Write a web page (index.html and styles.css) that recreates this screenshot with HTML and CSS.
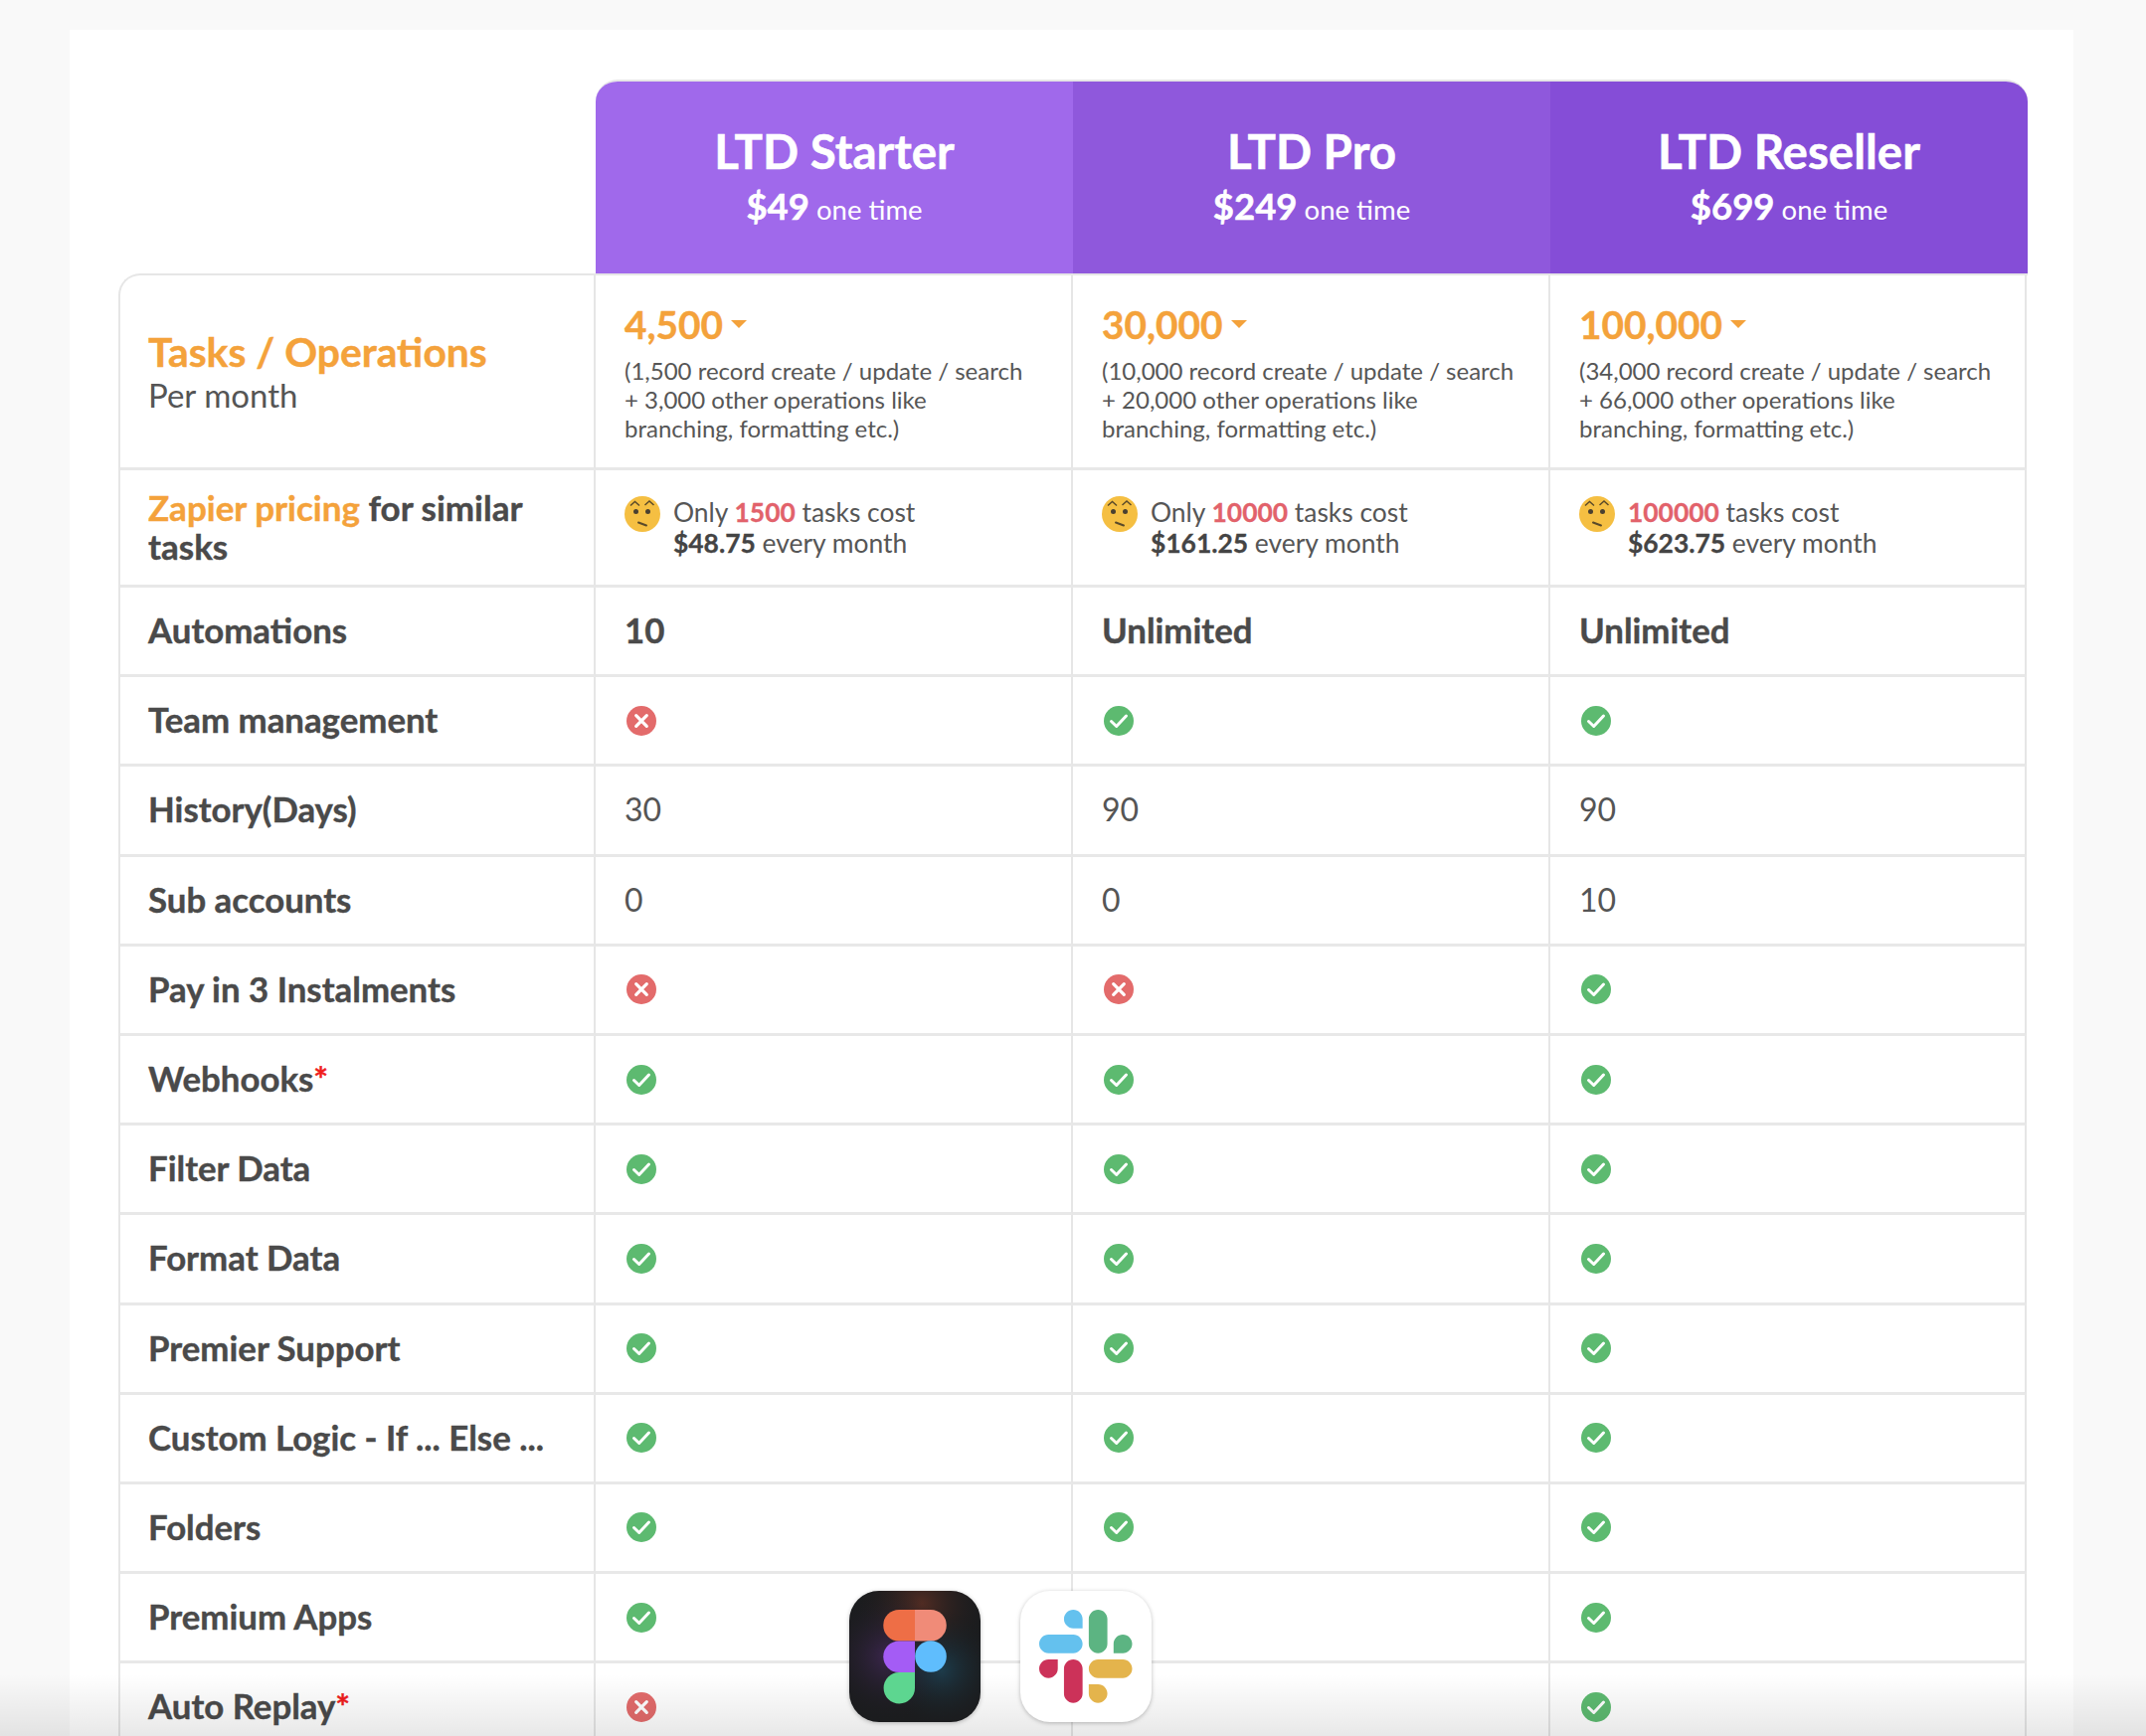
FILE: index.html
```html
<!DOCTYPE html>
<html lang="en">
<head>
<meta charset="utf-8">
<title>LTD pricing</title>
<link rel="stylesheet" href="styles.css">
</head>
<body>
<svg class="defs" width="0" height="0" aria-hidden="true">
  <symbol id="yes" viewBox="0 0 30 30"><circle cx="15" cy="15" r="15" fill="#5dba70"/><path d="M7.5 15.5l5.2 5 9.8-10.5" fill="none" stroke="#fff" stroke-width="3" stroke-linecap="round" stroke-linejoin="round"/></symbol>
  <symbol id="no" viewBox="0 0 30 30"><circle cx="15" cy="15" r="15" fill="#e36b6b"/><path d="M9.7 9.7l10.6 10.6M20.300 9.700l-10.600 10.600" fill="none" stroke="#fff" stroke-width="3.200" stroke-linecap="round"/></symbol>
  <symbol id="face" viewBox="0 0 36 36"><circle cx="18" cy="18" r="18" fill="#f5bf42"/><path d="M6 9.500l4.500-4 4.500 4M20.500 9l4.500-4 4.500 4" fill="none" stroke="#5a4a2a" stroke-width="1.500"/><circle cx="11.500" cy="15.500" r="2.500" fill="#4a4030"/><circle cx="23.500" cy="15.500" r="2.500" fill="#4a4030"/><path d="M14 26.500l8 3" fill="none" stroke="#5a4a2a" stroke-width="2" stroke-linecap="round"/></symbol>
</svg>
<main class="panel">
  <div class="plans">
    <div class="plan plan-a"><h2>LTD Starter</h2><p><b>$49</b> one time</p></div>
    <div class="plan plan-b"><h2>LTD Pro</h2><p><b>$249</b> one time</p></div>
    <div class="plan plan-c"><h2>LTD Reseller</h2><p><b>$699</b> one time</p></div>
  </div>
  <div class="grid">
    <div class="cell head first-cell"><div class="big-label">Tasks / Operations</div><div class="sub-label">Per month</div></div>
    <div class="cell tasks"><div class="count">4,500<i class="caret"></i></div><p>(1,500 record create / update / search + 3,000 other operations like branching, formatting etc.)</p></div>
    <div class="cell tasks"><div class="count">30,000<i class="caret"></i></div><p>(10,000 record create / update / search + 20,000 other operations like branching, formatting etc.)</p></div>
    <div class="cell tasks"><div class="count">100,000<i class="caret"></i></div><p>(34,000 record create / update / search + 66,000 other operations like branching, formatting etc.)</p></div>

    <div class="cell head zap-label"><span><em>Zapier pricing</em> for similar tasks</span></div>
    <div class="cell zap"><svg class="face"><use href="#face"/></svg><p>Only <strong>1500</strong> tasks cost<br><b>$48.75</b> every month</p></div>
    <div class="cell zap"><svg class="face"><use href="#face"/></svg><p>Only <strong>10000</strong> tasks cost<br><b>$161.25</b> every month</p></div>
    <div class="cell zap"><svg class="face"><use href="#face"/></svg><p><strong>100000</strong> tasks cost<br><b>$623.75</b> every month</p></div>

    <div class="cell label">Automations</div><div class="cell strong">10</div><div class="cell strong">Unlimited</div><div class="cell strong">Unlimited</div>
    <div class="cell label">Team management</div><div class="cell"><svg class="mark"><use href="#no"/></svg></div><div class="cell"><svg class="mark"><use href="#yes"/></svg></div><div class="cell"><svg class="mark"><use href="#yes"/></svg></div>
    <div class="cell label">History(Days)</div><div class="cell value">30</div><div class="cell value">90</div><div class="cell value">90</div>
    <div class="cell label">Sub accounts</div><div class="cell value">0</div><div class="cell value">0</div><div class="cell value">10</div>
    <div class="cell label">Pay in 3 Instalments</div><div class="cell"><svg class="mark"><use href="#no"/></svg></div><div class="cell"><svg class="mark"><use href="#no"/></svg></div><div class="cell"><svg class="mark"><use href="#yes"/></svg></div>
    <div class="cell label"><span>Webhooks<span class="star">*</span></span></div><div class="cell"><svg class="mark"><use href="#yes"/></svg></div><div class="cell"><svg class="mark"><use href="#yes"/></svg></div><div class="cell"><svg class="mark"><use href="#yes"/></svg></div>
    <div class="cell label">Filter Data</div><div class="cell"><svg class="mark"><use href="#yes"/></svg></div><div class="cell"><svg class="mark"><use href="#yes"/></svg></div><div class="cell"><svg class="mark"><use href="#yes"/></svg></div>
    <div class="cell label">Format Data</div><div class="cell"><svg class="mark"><use href="#yes"/></svg></div><div class="cell"><svg class="mark"><use href="#yes"/></svg></div><div class="cell"><svg class="mark"><use href="#yes"/></svg></div>
    <div class="cell label">Premier Support</div><div class="cell"><svg class="mark"><use href="#yes"/></svg></div><div class="cell"><svg class="mark"><use href="#yes"/></svg></div><div class="cell"><svg class="mark"><use href="#yes"/></svg></div>
    <div class="cell label">Custom Logic - If ... Else ...</div><div class="cell"><svg class="mark"><use href="#yes"/></svg></div><div class="cell"><svg class="mark"><use href="#yes"/></svg></div><div class="cell"><svg class="mark"><use href="#yes"/></svg></div>
    <div class="cell label">Folders</div><div class="cell"><svg class="mark"><use href="#yes"/></svg></div><div class="cell"><svg class="mark"><use href="#yes"/></svg></div><div class="cell"><svg class="mark"><use href="#yes"/></svg></div>
    <div class="cell label">Premium Apps</div><div class="cell"><svg class="mark"><use href="#yes"/></svg></div><div class="cell"><svg class="mark"><use href="#yes"/></svg></div><div class="cell"><svg class="mark"><use href="#yes"/></svg></div>
    <div class="cell label"><span>Auto Replay<span class="star">*</span></span></div><div class="cell"><svg class="mark"><use href="#no"/></svg></div><div class="cell"><svg class="mark"><use href="#yes"/></svg></div><div class="cell"><svg class="mark"><use href="#yes"/></svg></div>
  </div>
</main>
<div class="shade"></div>
<div class="dock">
  <svg class="app" viewBox="0 0 132 132" aria-label="Figma">
    <defs>
      <radialGradient id="gp" cx="0.3" cy="0.5" r="0.5"><stop offset="0" stop-color="#4a2a63" stop-opacity=".7"/><stop offset="1" stop-color="#1b1c1e" stop-opacity="0"/></radialGradient>
      <radialGradient id="gr" cx="0.55" cy="0.1" r="0.5"><stop offset="0" stop-color="#6a3325" stop-opacity=".7"/><stop offset="1" stop-color="#1b1c1e" stop-opacity="0"/></radialGradient>
      <radialGradient id="gb" cx="0.7" cy="0.6" r="0.45"><stop offset="0" stop-color="#1d4a60" stop-opacity=".7"/><stop offset="1" stop-color="#1b1c1e" stop-opacity="0"/></radialGradient>
    </defs>
    <rect width="132" height="132" rx="30" fill="#1b1c1e"/>
    <rect width="132" height="132" rx="30" fill="url(#gr)"/>
    <rect width="132" height="132" rx="30" fill="url(#gp)"/>
    <rect width="132" height="132" rx="30" fill="url(#gb)"/>
    <path d="M66 19H50a15.700 15.700 0 0 0 0 31.500h16z" fill="#ee6e46"/>
    <path d="M66 19h16a15.700 15.700 0 0 1 0 31.500H66z" fill="#f08b78"/>
    <path d="M66 50.500H50a15.700 15.700 0 0 0 0 31.500h16z" fill="#a45cf5"/>
    <circle cx="82" cy="66" r="15.800" fill="#5fbdfd"/>
    <path d="M66 82H50a15.700 15.700 0 1 0 16 15.700z" fill="#5dd690"/>
  </svg>
  <svg class="app" viewBox="0 0 132 132" aria-label="Slack">
    <rect width="132" height="132" rx="30" fill="#fff"/>
    <g transform="translate(19 19) scale(.0382)">
      <path d="m897.4 0c-135.3.1-244.8 109.9-244.7 245.2-.1 135.3 109.5 245.1 244.8 245.2h244.8v-245.1c.1-135.3-109.5-245.1-244.9-245.3.1 0 .1 0 0 0m0 654h-652.6c-135.3.1-244.9 109.9-244.8 245.2-.2 135.3 109.4 245.1 244.7 245.3h652.7c135.3-.1 244.9-109.9 244.8-245.2.1-135.4-109.5-245.2-244.8-245.3z" fill="#64c1ee"/>
      <path d="m2447.6 899.2c.1-135.3-109.5-245.1-244.8-245.2-135.3.1-244.9 109.9-244.8 245.2v245.3h244.8c135.3-.1 244.9-109.9 244.8-245.3zm-652.7 0v-654c.1-135.2-109.4-245-244.7-245.2-135.3.1-244.9 109.9-244.8 245.2v654c-.2 135.3 109.4 245.1 244.7 245.3 135.3-.1 244.9-109.9 244.8-245.3z" fill="#5cb482"/>
      <path d="m1550.1 2452.5c135.3-.1 244.9-109.9 244.8-245.2.1-135.3-109.5-245.1-244.8-245.2h-244.8v245.2c-.1 135.2 109.5 245 244.8 245.2zm0-654.1h652.700c135.3-.1 244.9-109.9 244.8-245.2.2-135.3-109.4-245.1-244.7-245.3h-652.7c-135.3.1-244.9 109.9-244.8 245.2-.1 135.4 109.4 245.2 244.7 245.3z" fill="#e4b44c"/>
      <path d="m0 1553.2c-.1 135.3 109.5 245.1 244.8 245.2 135.3-.1 244.9-109.9 244.8-245.2v-245.2h-244.8c-135.3.1-244.9 109.9-244.8 245.2zm652.7 0v654c-.2 135.3 109.4 245.1 244.7 245.3 135.3-.1 244.9-109.9 244.8-245.2v-653.9c.2-135.3-109.4-245.1-244.7-245.3-135.4 0-244.8 109.8-244.8 245.100z" fill="#cc3259"/>
    </g>
  </svg>
</div>
```
FILE: styles.css
```css
* { box-sizing: border-box; }
html, body { margin: 0; height: 100%; }
body {
  position: relative;
  height: 1746px;
  overflow: hidden;
  background: #f9f9f9;
  padding: 30px 73px 0 70px;
  font-family: "Lato", "Liberation Sans", sans-serif;
  color: #4a4a4a;
}
.defs { position: absolute; }
.panel {
  background: #fff;
  height: 1716px;
  padding: 50px 46px 0 49px;
  overflow: hidden;
}
.plans {
  display: grid;
  grid-template-columns: repeat(3, 480px);
  margin-left: 480px;
  height: 195px;
  border-top: 2px solid #e6e6e6;
  border-radius: 22px 22px 0 0;
  overflow: hidden;
}
.plan {
  color: #fff;
  text-align: center;
  padding-top: 43px;
}
.plan h2 { margin: 0; font-size: 47.500px; line-height: 54px; font-weight: 700; -webkit-text-stroke: .5px #fff; }
.plan p { margin: 3px 0 0; font-size: 27.500px; line-height: 50px; }
.plan p b { font-size: 36.500px; -webkit-text-stroke: .5px #fff; }
.plan-a { background: #a069eb; }
.plan-b { background: #8f58dc; }
.plan-c { background: #854dd7; }
.grid {
  display: grid;
  grid-template-columns: 478px 480px 480px 479px;
  grid-template-rows: 196px 118px repeat(14, 90.200px);
  border-top: 2px solid #e6e6e6;
  border-left: 2px solid #e6e6e6;
  border-top-left-radius: 22px;
}
.cell {
  display: flex;
  align-items: center;
  padding: 0 29px;
  border-right: 2px solid #e6e6e6;
  border-bottom: 3px solid #e8e8e8;
  font-size: 32px;
}
.head { flex-direction: column; align-items: flex-start; justify-content: center; padding-left: 28px; }
.big-label { font-size: 40.800px; line-height: 46px; font-weight: 700; color: #f4a23b; -webkit-text-stroke: .4px #f4a23b; }
.sub-label { font-size: 33px; line-height: 40px; color: #555; }
.tasks { flex-direction: column; align-items: flex-start; justify-content: flex-start; padding: 25px 33px 0 29px; }
.count { display: flex; align-items: center; font-size: 38.800px; line-height: 48px; font-weight: 700; color: #f4a23b; -webkit-text-stroke: .4px #f4a23b; }
.caret {
  width: 0; height: 0; margin-left: 8px;
  border-left: 8px solid transparent;
  border-right: 8px solid transparent;
  border-top: 8px solid #f4a23b;
}
.tasks p { margin: 8px 0 0; font-size: 24px; line-height: 29px; color: #565656; }
.zap-label { padding-bottom: 2px; }
.zap-label span { font-size: 35px; line-height: 39px; font-weight: 700; -webkit-text-stroke: .4px; }
.zap-label em { font-style: normal; color: #f4a23b; }
.zap { align-items: flex-start; padding-top: 27px; gap: 13px; }
.face { width: 36px; height: 36px; flex: none; margin-top: -1px; }
.zap p { margin: 0; font-size: 26.400px; line-height: 31px; color: #565656; }
.zap strong { color: #e2626b; font-weight: 700; -webkit-text-stroke: .3px; }
.zap b { color: #444; font-weight: 700; -webkit-text-stroke: .3px; }
.label, .strong { font-size: 34.800px; font-weight: 700; padding-bottom: 2px; -webkit-text-stroke: .4px; }
.label { padding-left: 28px; }
.value { font-size: 32px; color: #555; padding-bottom: 2px; }
.star { color: #f01d1d; }
.mark { width: 30px; height: 30px; flex: none; margin-left: 2px; }
.shade {
  position: absolute;
  left: 0; right: 0; bottom: 0;
  height: 62px;
  background: linear-gradient(rgba(0,0,0,0), rgba(0,0,0,.09));
}
.dock {
  position: absolute;
  left: 854px;
  bottom: 14px;
  display: flex;
  gap: 40px;
}
.app { width: 132px; height: 132px; filter: drop-shadow(0 1px 2px rgba(0,0,0,.25)); }
```
